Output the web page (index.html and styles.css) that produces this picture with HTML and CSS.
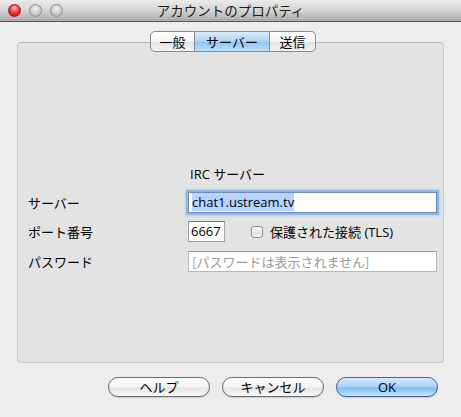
FILE: index.html
```html
<!DOCTYPE html>
<html lang="ja">
<head>
<meta charset="utf-8">
<title>アカウントのプロパティ</title>
<link rel="stylesheet" href="styles.css">
</head>
<body>
<div class="window">
  <div class="titlebar">
    <div class="lights">
      <span class="light red"></span>
      <span class="light gray"></span>
      <span class="light gray"></span>
    </div>
    <div class="title">アカウントのプロパティ</div>
  </div>
  <div class="tabs">
    <div class="tab first">一般</div>
    <div class="tab selected">サーバー</div>
    <div class="tab last">送信</div>
  </div>
  <div class="group">
    <div class="row row-head">
      <div class="label"></div>
      <div class="section">IRC サーバー</div>
    </div>
    <div class="row row-server">
      <div class="label">サーバー</div>
      <div class="field field-server"><span class="sel">chat1.ustream.tv</span></div>
    </div>
    <div class="row row-port">
      <div class="label">ポート番号</div>
      <div class="field field-port">6667</div>
      <span class="checkbox"></span>
      <span class="check-label">保護された接続 (TLS)</span>
    </div>
    <div class="row row-pass">
      <div class="label">パスワード</div>
      <div class="field field-pass">[パスワードは表示されません]</div>
    </div>
  </div>
  <div class="buttons">
    <div class="btn">ヘルプ</div>
    <div class="btn">キャンセル</div>
    <div class="btn default">OK</div>
  </div>
</div>
</body>
</html>
```
FILE: styles.css
```css
* { box-sizing: border-box; }
html, body { margin: 0; padding: 0; }
body {
  width: 461px;
  height: 417px;
  background: #ededed;
  font-family: "Open Sans", "Noto Sans CJK JP", sans-serif;
  font-size: 13px;
  color: #000;
  overflow: hidden;
}
.window { width: 461px; height: 417px; background: #ededed; }

.titlebar {
  height: 22px;
  background: linear-gradient(#ebebeb, #d4d4d4 50%, #aaaaaa);
  border-bottom: 1px solid #555;
  display: flex;
  align-items: center;
  position: relative;
}
.lights { display: flex; gap: 8px; padding-left: 8px; }
.light {
  width: 13px; height: 13px; border-radius: 50%;
  display: block;
}
.light.red {
  background: radial-gradient(circle at 50% 30%, #ffc4c4 0, #f23a3a 45%, #c40c0c 100%);
  border: 1px solid #8c1a1a;
}
.light.gray {
  background: radial-gradient(circle at 50% 35%, #f2f2f2 0, #cfcfcf 50%, #a9a9a9 100%);
  border: 1px solid #8f8f8f;
}
.title {
  position: absolute; left: 0; right: 0; top: 0;
  height: 21px; line-height: 21px;
  text-align: center;
  font-family: "Noto Sans CJK JP", sans-serif;
  font-size: 13.5px;
  color: #1a1a1a;
}

.tabs {
  display: flex;
  margin: 9px 0 0 150px;
  height: 21px;
  position: relative;
  z-index: 2;
}
.tab {
  height: 21px;
  line-height: 19px;
  text-align: center;
  font-family: "Noto Sans CJK JP", sans-serif;
  border: 1px solid #8a8a8a;
  border-left: none;
  background: linear-gradient(#ffffff, #f4f4f4 50%, #e2e2e2 52%, #f3f3f3);
}
.tab.first { width: 45px; border-left: 1px solid #8a8a8a; border-radius: 5px 0 0 5px; }
.tab.selected {
  width: 75px;
  background: linear-gradient(#d9ecfb, #aad3f6 50%, #8cc3f2 52%, #bde0fb);
  border-color: #7b8ea3;
}
.tab.last { width: 46px; border-radius: 0 5px 5px 0; }

.group {
  margin: -10px 0 0 17px;
  width: 427px;
  height: 321px;
  background: #e3e3e3;
  border: 1px solid #c9c9c9;
  border-top-color: #b5b5b5;
  border-radius: 4px;
  padding: 122px 0 0 9px;
  position: relative;
  z-index: 1;
}

.row { display: flex; align-items: center; height: 21px; }
.row-head { height: 16px; }
.row-server { margin-top: 11px; }
.row-port { margin-top: 8px; }
.row-pass { margin-top: 9px; }

.label {
  width: 161px;
  flex: none;
  font-family: "Noto Sans CJK JP", sans-serif;
  padding-left: 1px;
}
.section {
  font-family: "Open Sans", "Noto Sans CJK JP", sans-serif;
  padding-left: 2px;
}

.field {
  height: 21px;
  background: #fff;
  border: 1px solid #a3a3a3;
  border-top-color: #7e7e7e;
  line-height: 19px;
  padding-left: 3px;
  white-space: nowrap;
  overflow: hidden;
}
.field-server, .field-pass { width: 249px; flex: none; }
.field-server {
  box-shadow: 0 0 0 2px #8fb5e2, 0 0 2px 3px #b7d1ee;
  border-color: #6f8fb8;
}
.sel { background: #b5d5ff; }
.field-port { width: 37px; flex: none; padding-left: 2px; }
.checkbox {
  width: 12px; height: 12px;
  margin-left: 26px;
  border: 1px solid #8c8c8c;
  border-radius: 3px;
  background: linear-gradient(#ffffff, #ececec 50%, #dedede 52%, #f4f4f4);
  flex: none;
}
.check-label {
  margin-left: 7px;
  font-family: "Open Sans", "Noto Sans CJK JP", sans-serif;
}
.field-pass {
  color: #9a9a9a;
  font-family: "Noto Sans CJK JP", sans-serif;
  font-size: 13px;
  border-color: #b8b8b8;
  border-top-color: #9a9a9a;
}

.buttons {
  display: flex;
  justify-content: flex-end;
  gap: 12px;
  margin: 14px 23px 0 0;
}
.btn {
  width: 102px;
  height: 20px;
  border-radius: 10px;
  border: 1px solid #6b6b6b;
  background: linear-gradient(#ffffff, #f3f3f3 50%, #e4e4e4 55%, #fafafa);
  text-align: center;
  line-height: 18px;
  font-family: "Noto Sans CJK JP", sans-serif;
  box-shadow: 0 1px 1px rgba(0,0,0,0.15);
}
.btn.default {
  border-color: #4b5f94;
  background: linear-gradient(#d6ebfc, #a3d0f7 50%, #7fbaf0 55%, #c5e6fd);
  font-family: "Open Sans", sans-serif;
}
```
